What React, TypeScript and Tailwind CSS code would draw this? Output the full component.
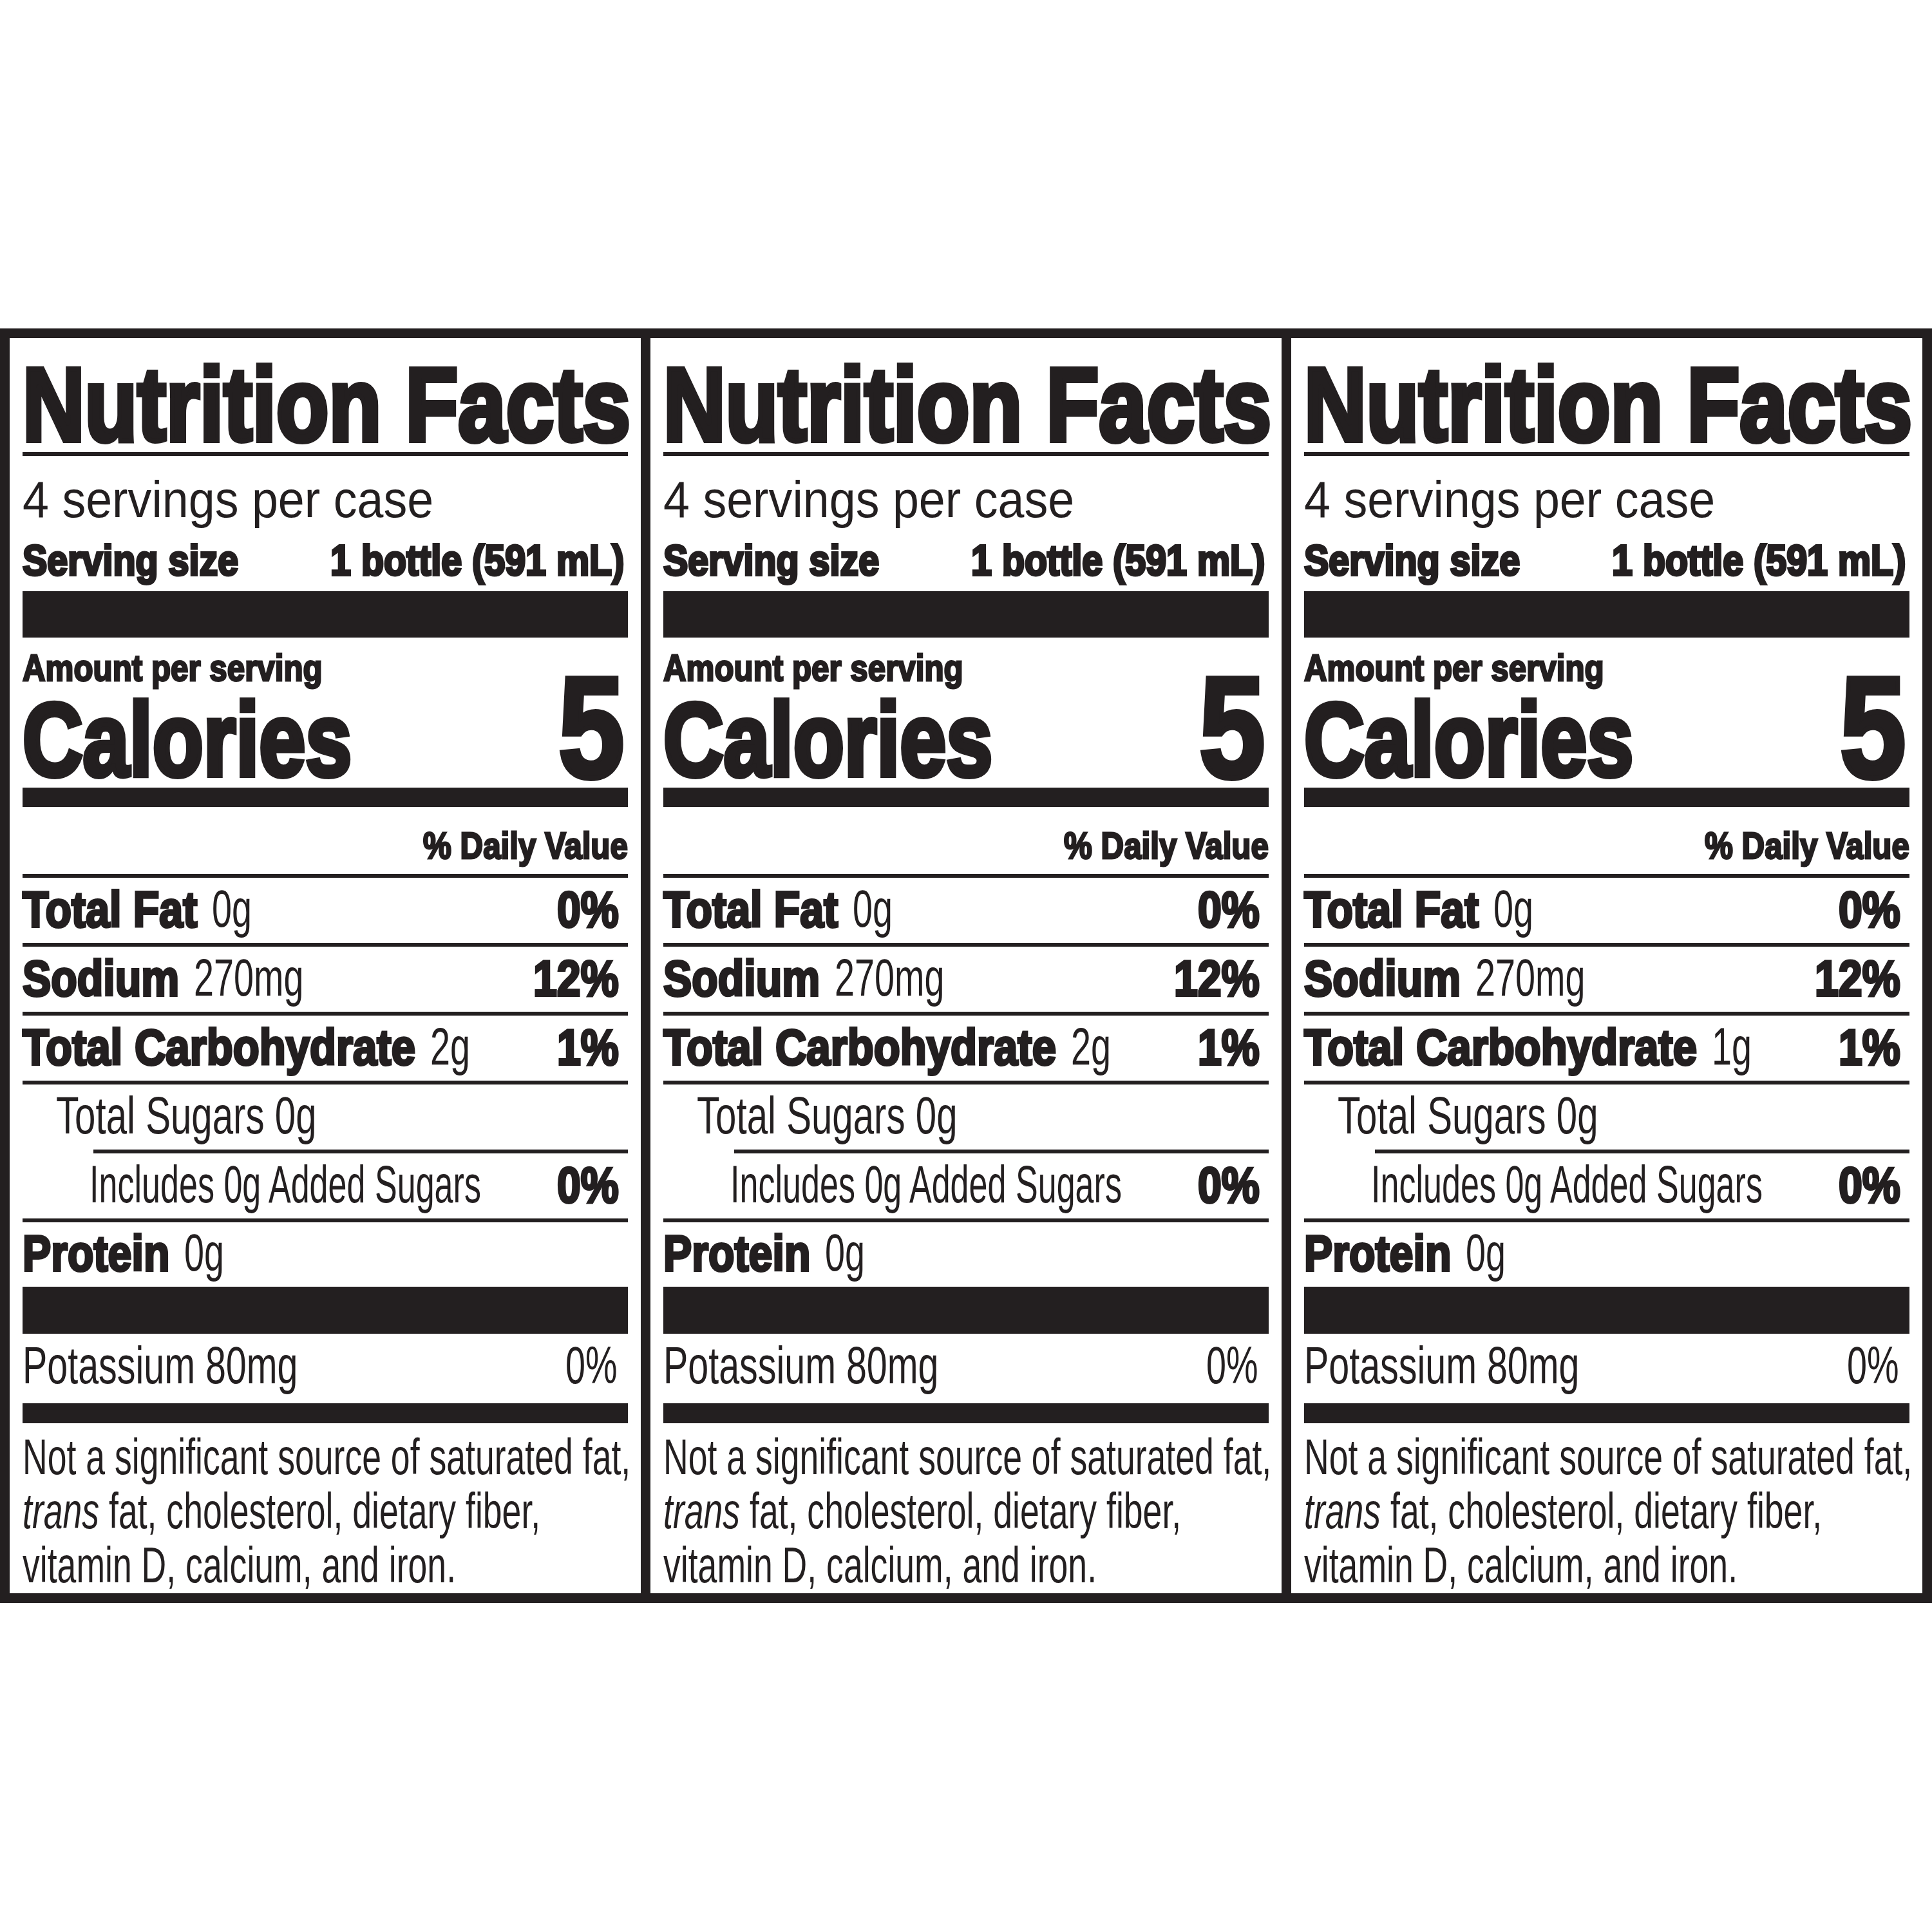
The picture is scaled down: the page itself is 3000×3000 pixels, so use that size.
import { useLayoutEffect, useRef, useState } from "react";

// Liberation Sans squeezed horizontally to stand in for Helvetica Condensed.
// The outer box takes the measured (scaled) width so the flow stays right.
function Cond({ className = "", children }: { className?: string; children: React.ReactNode }) {
  const ref = useRef<HTMLSpanElement>(null);
  const [w, setW] = useState<number | undefined>(undefined);

  useLayoutEffect(() => {
    const measure = () => {
      if (ref.current) setW(ref.current.getBoundingClientRect().width);
    };
    measure();
    document.fonts?.ready.then(measure);
  }, []);

  return (
    <span className="inline-block whitespace-nowrap" style={{ width: w }}>
      <span ref={ref} className={`inline-block origin-left ${className}`}>
        {children}
      </span>
    </span>
  );
}

// title is stretched to fill the column width
function FitText({ className = "", children }: { className?: string; children: React.ReactNode }) {
  const outer = useRef<HTMLDivElement>(null);
  const inner = useRef<HTMLSpanElement>(null);
  const [s, setS] = useState(1);

  useLayoutEffect(() => {
    const fit = () => {
      if (outer.current && inner.current) {
        setS((outer.current.clientWidth + 4) / inner.current.offsetWidth);
      }
    };
    fit();
    document.fonts?.ready.then(fit);
  }, []);

  return (
    <div ref={outer} className="w-full whitespace-nowrap">
      <span ref={inner} className={`inline-block origin-left ${className}`} style={{ transform: `scaleX(${s})` }}>
        {children}
      </span>
    </div>
  );
}

function Bold({ children, className = "scale-x-[0.85]" }: { children: React.ReactNode; className?: string }) {
  return (
    <Cond className={`text-[78px] font-bold [-webkit-text-stroke:4px_#231f20] ${className}`}>{children}</Cond>
  );
}

function Rule() {
  return <div className="h-[6px] bg-[#231f20]" />;
}

interface NutrientProps {
  label?: string;
  labelScale?: string;
  amount: string;
  amountScale?: string;
  pct?: string;
  indent?: string;
  height?: string;
}

function Nutrient({
  label,
  labelScale,
  amount,
  amountScale = "scale-x-[0.68]",
  pct,
  indent = "",
  height = "h-[101px] pt-[7px]",
}: NutrientProps) {
  return (
    <div className={`${height} flex justify-between text-[82px] leading-none`}>
      <div className={indent}>
        {label && (
          <>
            <Bold className={labelScale}>{label}</Bold>{" "}
          </>
        )}
        <Cond className={amountScale}>{amount}</Cond>
      </div>
      {pct && (
        <div className="pr-[14px]">
          <Bold>{pct}</Bold>
        </div>
      )}
    </div>
  );
}

function Panel({ carbs }: { carbs: string }) {
  return (
    <div className="flex-1 basis-0 min-w-0 px-[20px] flex flex-col">
      <div className="h-[177px] pt-[22px] text-[162px] leading-none">
        <FitText className="font-bold [-webkit-text-stroke:8px_#231f20]">Nutrition Facts</FitText>
      </div>
      <Rule />

      <div className="h-[104px] pt-[28px] text-[80px] leading-none">
        <Cond className="scale-x-[0.92]">4 servings per case</Cond>
      </div>
      <div className="h-[106px] pt-[25px] text-[66px] leading-none flex justify-between">
        <Cond className="font-bold scale-x-[0.87] [-webkit-text-stroke:4px_#231f20]">Serving size</Cond>
        <div className="pr-[6px]">
          <Cond className="font-bold scale-x-[0.87] [-webkit-text-stroke:4px_#231f20]">1 bottle (591 mL)</Cond>
        </div>
      </div>
      <div className="h-[72px] bg-[#231f20]" />

      <div className="h-[233px] flex justify-between">
        <div className="flex flex-col">
          <div className="h-[72px] pt-[18px] text-[58px] leading-none">
            <Cond className="font-bold scale-x-[0.85] [-webkit-text-stroke:3px_#231f20]">Amount per serving</Cond>
          </div>
          <div className="h-[161px] pt-[5px] text-[162px] leading-none">
            <Cond className="font-bold scale-x-[0.8] [-webkit-text-stroke:8px_#231f20]">Calories</Cond>
          </div>
        </div>
        <div className="pt-[29px] pr-[6px] text-[222px] leading-none">
          <Cond className="font-bold scale-x-[0.83] [-webkit-text-stroke:8px_#231f20]">5</Cond>
        </div>
      </div>
      <div className="h-[30px] bg-[#231f20]" />

      <div className="h-[104px] pt-[31px] text-[58px] leading-none text-right">
        <Cond className="font-bold scale-x-[0.85] [-webkit-text-stroke:3px_#231f20]">% Daily Value</Cond>
      </div>
      <Rule />

      <Nutrient label="Total Fat" amount="0g" pct="0%" />
      <Rule />
      <Nutrient label="Sodium" amount="270mg" pct="12%" />
      <Rule />
      <Nutrient label="Total Carbohydrate" labelScale="scale-x-[0.86]" amount={carbs} pct="1%" />
      <Rule />
      <Nutrient amount="Total Sugars 0g" amountScale="scale-x-[0.71]" indent="pl-[52px]" />
      <div className="h-[6px] ml-[110px] bg-[#231f20]" />
      <Nutrient amount="Includes 0g Added Sugars" amountScale="scale-x-[0.635]" pct="0%" indent="pl-[104px]" />
      <Rule />
      <Nutrient label="Protein" amount="0g" height="h-[100px] pt-[6px]" />
      <div className="h-[73px] bg-[#231f20]" />

      <div className="h-[108px] pt-[8px] flex justify-between text-[82px] leading-none">
        <Cond className="scale-x-[0.70]">Potassium 80mg</Cond>
        <div className="pr-[16px]">
          <Cond className="scale-x-[0.68]">0%</Cond>
        </div>
      </div>
      <div className="h-[31px] bg-[#231f20]" />

      <div className="h-[264px] pt-[10px] text-[78px] leading-[84px]">
        <div>
          <Cond className="scale-x-[0.687]">Not a significant source of saturated fat,</Cond>
        </div>
        <div>
          <Cond className="scale-x-[0.687]">
            <span className="italic">trans</span> fat, cholesterol, dietary fiber,
          </Cond>
        </div>
        <div>
          <Cond className="scale-x-[0.687]">vitamin D, calcium, and iron.</Cond>
        </div>
      </div>
    </div>
  );
}

export default function App() {
  return (
    <div className="w-[3000px] h-[3000px] overflow-hidden bg-white text-[#231f20] font-['Liberation_Sans',Arial,sans-serif] pt-[510px]">
      <div className="flex border-[15px] border-[#231f20] divide-x-[15px] divide-[#231f20]">
        <Panel carbs="2g" />
        <Panel carbs="2g" />
        <Panel carbs="1g" />
      </div>
    </div>
  );
}
